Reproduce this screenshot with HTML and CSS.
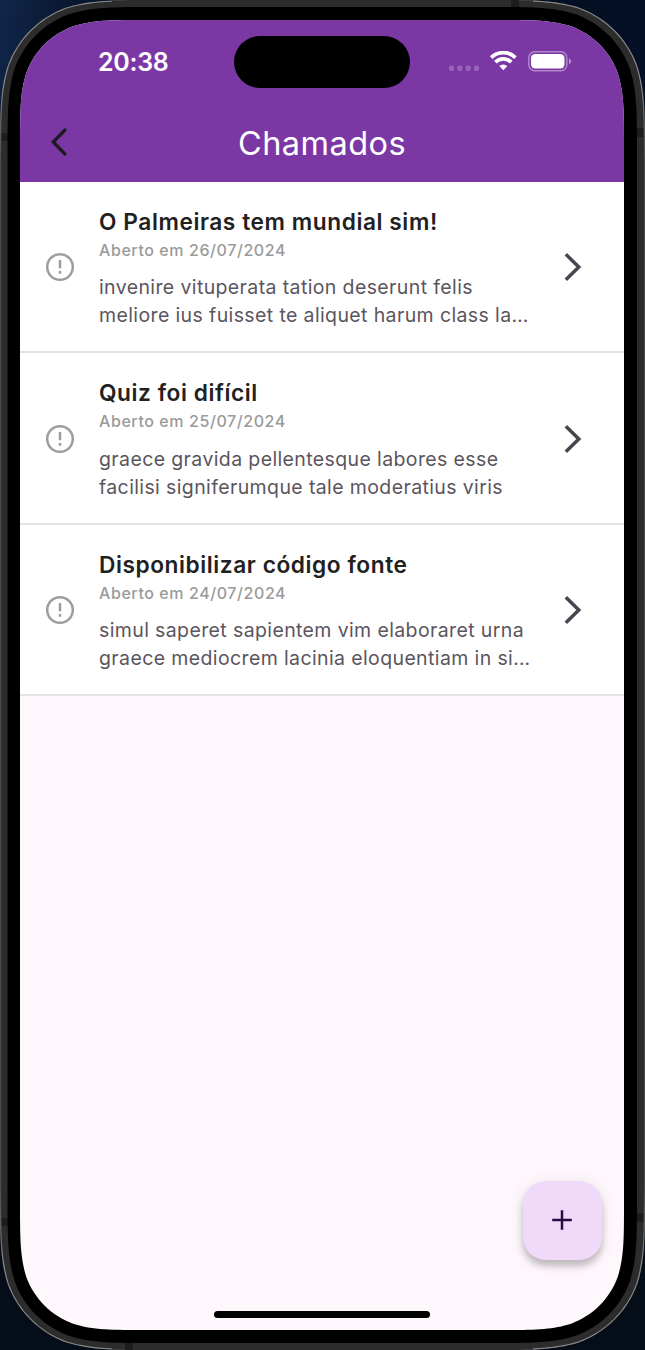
FILE: index.html
```html
<!DOCTYPE html>
<html lang="pt-BR">
<head>
<meta charset="utf-8">
<title>Chamados</title>
<link rel="stylesheet" href="styles.css">
</head>
<body>
<div class="device">
  <svg class="frame" width="645" height="1350" viewBox="0 0 645 1350" aria-hidden="true">
    <defs>
      <linearGradient id="rim" x1="0" y1="0" x2="0" y2="1">
        <stop offset="0" stop-color="#8a8a8a"/><stop offset=".06" stop-color="#8a8a8a"/><stop offset=".12" stop-color="#4c4c4c"/>
        <stop offset=".88" stop-color="#4c4c4c"/><stop offset=".94" stop-color="#8a8a8a"/><stop offset="1" stop-color="#8a8a8a"/>
      </linearGradient>
      <path id="shell" d="M159 0H486C531.8 0 554.7 0 579.3 7.8C606.2 17.6 627.4 38.8 637.2 65.7C645 90.3 645 113.2 645 159V1191C645 1236.8 645 1259.7 637.2 1284.3C627.4 1311.2 606.2 1332.4 579.3 1342.2C554.7 1350 531.8 1350 486 1350H159C113.2 1350 90.3 1350 65.7 1342.2C38.8 1332.4 17.6 1311.2 7.8 1284.3C0 1259.7 0 1236.8 0 1191V159C0 113.2 0 90.3 7.8 65.7C17.6 38.8 38.8 17.6 65.7 7.8C90.3 0 113.2 0 159 0Z"/>
      <clipPath id="body-clip"><use href="#shell"/></clipPath>
    </defs>
    <g clip-path="url(#body-clip)">
      <rect width="645" height="1350" fill="#2c2c2c"/>
      <path fill="#1d1d1d" d="M0 133h9v8H0zM0 1218h9v8H0zM636 128h9v9h-9zM636 1213h9v9h-9zM125 1341h8v9h-8z"/>
      <use href="#shell" fill="none" stroke="url(#rim)" stroke-width="2.2"/>
      <path fill="#2c2c2c" d="M112 0h421v2H112zM112 1348h421v2H112z"/>
      <path fill="#1d1d1d" d="M511 0h8v9h-8zM125 1341h8v9h-8z"/>
    </g>
    <path transform="translate(7.5 7)" d="M148.3 0H481.2C523.9 0 545.3 0 568.2 7.3C593.3 16.4 613.1 36.2 622.2 61.3C629.5 84.2 629.5 105.6 629.5 148.3V1187.7C629.5 1230.4 629.5 1251.8 622.2 1274.7C613.1 1299.8 593.3 1319.6 568.2 1328.7C545.3 1336 523.9 1336 481.2 1336H148.3C105.6 1336 84.2 1336 61.3 1328.7C36.2 1319.6 16.4 1299.8 7.3 1274.7C0 1251.8 0 1230.4 0 1187.7V148.3C0 105.6 0 84.2 7.3 61.3C16.4 36.2 36.2 16.4 61.3 7.3C84.2 0 105.6 0 148.3 0Z"/>
  </svg>

  <div class="screen">
    <header class="top">
      <div class="status">
        <span class="clock">20:38</span>
        <span class="island"></span>
        <svg class="indicators" width="124" height="24" viewBox="0 0 124 24" aria-hidden="true">
          <g fill="#fff" fill-opacity=".22">
            <rect x="1" y="14.5" width="5" height="5.5" rx="1.8"/><rect x="9.3" y="14.5" width="5" height="5.5" rx="1.8"/><rect x="17.7" y="14.5" width="5" height="5.5" rx="1.8"/><rect x="26" y="14.5" width="5" height="5.5" rx="1.8"/>
          </g>
          <g fill="none" stroke="#fff" stroke-width="3.7">
            <path d="M43.2 6.6a17.2 17.2 0 0 1 24.2 0"/>
            <path d="M47.4 11.1a11.2 11.2 0 0 1 15.8 0"/>
          </g>
          <path fill="#fff" d="M51.3 15.1a5.8 5.8 0 0 1 8 0l-4 4.2z"/>
          <rect x="80.8" y="0.8" width="38" height="19" rx="6" fill="none" stroke="#fff" stroke-opacity=".4" stroke-width="1.5"/>
          <rect x="83" y="3" width="33.5" height="14.5" rx="4.2" fill="#fff"/>
          <path fill="#fff" fill-opacity=".45" d="M121 7.3a3.2 3.2 0 0 1 0 6z"/>
        </svg>
      </div>
      <div class="appbar">
        <svg class="back" width="20" height="30" viewBox="0 0 20 30" aria-hidden="true"><path d="M16 3L4.2 15 16 27"/></svg>
        <h1 class="heading">Chamados</h1>
      </div>
    </header>

    <main class="list">
      <article class="ticket">
        <svg class="alert" width="30" height="30" viewBox="0 0 30 30" aria-hidden="true"><circle cx="15" cy="15" r="12.8"/><path d="M15 8v8.2M15 18.9v2.8"/></svg>
        <div class="content">
          <h2 class="title">O Palmeiras tem mundial sim!</h2>
          <p class="date">Aberto em 26/07/2024</p>
          <p class="text">invenire vituperata tation deserunt felis<br>meliore ius fuisset te aliquet harum class la…</p>
        </div>
        <svg class="chevron" width="20" height="30" viewBox="0 0 20 30" aria-hidden="true"><path d="M2.8 2.3L15.8 15l-13 12.7"/></svg>
      </article>
      <article class="ticket">
        <svg class="alert" width="30" height="30" viewBox="0 0 30 30" aria-hidden="true"><circle cx="15" cy="15" r="12.8"/><path d="M15 8v8.2M15 18.9v2.8"/></svg>
        <div class="content">
          <h2 class="title">Quiz foi difícil</h2>
          <p class="date">Aberto em 25/07/2024</p>
          <p class="text">graece gravida pellentesque labores esse<br>facilisi signiferumque tale moderatius viris</p>
        </div>
        <svg class="chevron" width="20" height="30" viewBox="0 0 20 30" aria-hidden="true"><path d="M2.8 2.3L15.8 15l-13 12.7"/></svg>
      </article>
      <article class="ticket">
        <svg class="alert" width="30" height="30" viewBox="0 0 30 30" aria-hidden="true"><circle cx="15" cy="15" r="12.8"/><path d="M15 8v8.2M15 18.9v2.8"/></svg>
        <div class="content">
          <h2 class="title">Disponibilizar código fonte</h2>
          <p class="date">Aberto em 24/07/2024</p>
          <p class="text">simul saperet sapientem vim elaboraret urna<br>graece mediocrem lacinia eloquentiam in si…</p>
        </div>
        <svg class="chevron" width="20" height="30" viewBox="0 0 20 30" aria-hidden="true"><path d="M2.8 2.3L15.8 15l-13 12.7"/></svg>
      </article>
    </main>

    <button class="fab" aria-label="Adicionar"><svg width="22" height="22" viewBox="0 0 22 22" aria-hidden="true"><path d="M11 1.2v19.6M1.2 11h19.6"/></svg></button>
    <div class="home"></div>
  </div>
</div>
</body>
</html>
```
FILE: styles.css
```css
* { box-sizing: border-box; }

body {
  margin: 0;
  font-family: Inter, "Liberation Sans", sans-serif;
  background: linear-gradient(100deg, #10264a 0%, #0a1730 8%, #050d1e 40%, #04122c 100%);
}

.device {
  position: relative;
  width: 645px;
  height: 1350px;
  padding: 20px 21px 20px 20px;
  overflow: hidden;
  background: linear-gradient(to bottom, transparent 50%, #050d18 90%);
}

.frame { position: absolute; inset: 0; }

.screen {
  position: relative;
  display: flex;
  flex-direction: column;
  width: 604px;
  height: 1310px;
  background: #fef7fc;
  clip-path: path("M128.4 0H475.6C512.6 0 531.1 0 551 6.3C572.7 14.2 589.8 31.3 597.7 53C604 72.9 604 91.4 604 128.4V1181.6C604 1218.6 604 1237.1 597.7 1257C589.8 1278.7 572.7 1295.8 551 1303.7C531.1 1310 512.6 1310 475.6 1310H128.4C91.4 1310 72.9 1310 53 1303.7C31.3 1295.8 14.2 1278.7 6.3 1257C0 1237.1 0 1218.6 0 1181.6V128.4C0 91.4 0 72.9 6.3 53C14.2 31.3 31.3 14.2 53 6.3C72.9 0 91.4 0 128.4 0Z");
}

.top { height: 161.5px; flex: none; background: #7b38a5; }

.status {
  display: grid;
  grid-template-columns: 213.5px 176.5px 1fr;
  align-items: center;
  height: 83px;
}

.clock {
  padding-left: 78px;
  font-size: 25px;
  font-weight: 600;
  letter-spacing: -0.3px;
  color: #fff;
}

.island { height: 52px; border-radius: 26px; background: #000; }

.indicators { margin: 3px 0 0 38px; }

.appbar {
  display: grid;
  grid-template-columns: 76px 1fr 76px;
  align-items: center;
  height: 78px;
}

.back { margin: 0 0 0 29px; fill: none; stroke: #1d1b20; stroke-width: 3.3; stroke-linecap: round; }

.heading {
  margin: 2px 0 0;
  text-align: center;
  font-size: 32.5px;
  font-weight: 400;
  letter-spacing: 0.45px;
  color: #fff;
}

.ticket {
  display: grid;
  grid-template-columns: 30px 1fr 20px;
  align-items: center;
  height: 171.5px;
  padding: 2px 41px 0 25px;
  background: #fff;
  border-bottom: 2px solid #e3e3e5;
}

.alert { fill: none; stroke: #9d9d9d; stroke-width: 2.5; }

.content { padding-left: 24px; white-space: nowrap; }

.title, .date, .text { margin: 0; }

.title { font-size: 22.7px; line-height: 32px; font-weight: 600; letter-spacing: 0.57px; color: #212121; }

.date { margin-top: -1px; font-size: 16px; line-height: 26px; font-weight: 500; letter-spacing: 0.58px; color: #9a9a9a; }

.text { margin-top: 10.5px; font-size: 19.5px; line-height: 28px; letter-spacing: 0.38px; color: #5b555e; }

.chevron { fill: none; stroke: #49454f; stroke-width: 3.5; }

.fab {
  position: absolute;
  left: 502.5px;
  top: 1160.5px;
  display: grid;
  place-items: center;
  width: 79px;
  height: 79px;
  padding: 0;
  border: 0;
  border-radius: 23px;
  background: #f1d9fa;
  box-shadow: 0 6px 7px rgba(0, 0, 0, 0.22), 0 2px 18px rgba(0, 0, 0, 0.08);
}

.fab path { fill: none; stroke: #2c0b41; stroke-width: 2.5; }

.home {
  width: 216px;
  height: 7px;
  margin: auto 0 12px 194px;
  border-radius: 4px;
  background: #000;
}
```
